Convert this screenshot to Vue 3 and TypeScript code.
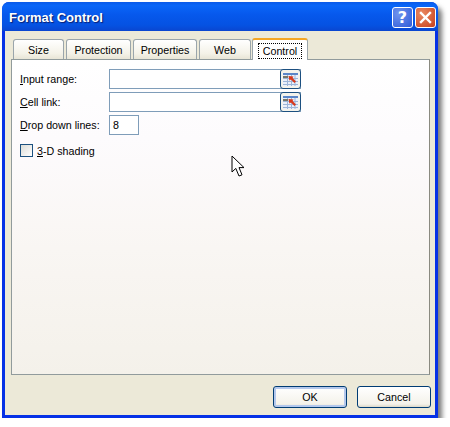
<script setup lang="ts">
const tabs = [
  { label: 'Size', width: 51 },
  { label: 'Protection', width: 65 },
  { label: 'Properties', width: 64 },
  { label: 'Web', width: 52 },
]
const fields = [
  { key: 'I', rest: 'nput range:' },
  { key: 'C', rest: 'ell link:' },
]
</script>

<template>
  <div class="window">
    <div class="titlebar">
      <span class="title">Format Control</span>
      <button class="cap help">?</button>
      <button class="cap close">
        <svg width="13" height="13" viewBox="0 0 13 13">
          <path d="M2 2 L11 11 M11 2 L2 11" stroke="#fff" stroke-width="2.4" stroke-linecap="square" />
        </svg>
      </button>
    </div>
    <div class="body">
      <div class="tabs">
        <div v-for="t in tabs" :key="t.label" class="tab" :style="{ width: t.width + 'px' }">{{ t.label }}</div>
        <div class="tab active"><span class="focus">Control</span></div>
      </div>
      <div class="pane">
        <div v-for="f in fields" :key="f.key" class="row">
          <label class="lbl"><u>{{ f.key }}</u>{{ f.rest }}</label>
          <div class="input wide">
            <button class="refedit">
              <svg width="15" height="13" viewBox="0 0 15 13">
                <rect x="0" y="0" width="15" height="13" fill="#e9effa" />
                <rect x="0" y="0" width="15" height="2" fill="#5b86c8" />
                <path d="M0 5.5H15M0 8.5H15M0 11.5H15M4.5 2V13M8.5 2V13M12 2V13" stroke="#9db5d8" />
                <rect x="0" y="3" width="5" height="2" fill="#77776a" />
                <path d="M5.5 3 L10.5 3.4 L9.6 4.9 L13 8.4 L11.4 10 L8 6.5 L6.4 7.6 Z" fill="#d8391c" />
              </svg>
            </button>
          </div>
        </div>
        <div class="row">
          <label class="lbl"><u>D</u>rop down lines:</label>
          <div class="input small">8</div>
        </div>
        <div class="check">
          <span class="box"></span>
          <span><u>3</u>-D shading</span>
        </div>
        <svg class="cursor" width="14" height="23" viewBox="0 0 14 23">
          <path d="M1 1 V17 L4.8 13.4 L8 21 L11 19.8 L8 12.6 L13 12.6 Z" fill="#fff" stroke="#000" stroke-width="1" />
        </svg>
      </div>
      <div class="actions">
        <button class="btn default">OK</button>
        <button class="btn">Cancel</button>
      </div>
    </div>
  </div>
</template>

<style>
html,
body {
  margin: 0;
  background: #fff;
}
</style>

<style scoped>
.window {
  box-sizing: border-box;
  width: 436px;
  height: 416px;
  margin: 2px 0 0 2px;
  display: flex;
  flex-direction: column;
  background: #0531e6;
  border-radius: 7px 7px 0 0;
  box-shadow: 4px 5px 5px rgba(50, 50, 50, 0.65);
  font-family: "Liberation Sans", Tahoma, sans-serif;
  font-size: 10.7px;
  color: #000;
}

.titlebar {
  box-sizing: border-box;
  height: 29px;
  flex: none;
  display: flex;
  align-items: center;
  gap: 2px;
  padding: 2px 2px 0 7px;
  border-radius: 7px 7px 0 0;
  background: linear-gradient(#0a5ae8 0, #0a66f8 12%, #0658ec 45%, #0552e2 80%, #0a46d0 100%);
}

.title {
  flex: 1;
  color: #fff;
  font-size: 13px;
  font-weight: 700;
  text-shadow: 1px 1px 1px #0a1f70;
}

.cap {
  box-sizing: border-box;
  width: 21px;
  height: 21px;
  padding: 0;
  display: flex;
  align-items: center;
  justify-content: center;
  border: 1px solid #fff;
  border-radius: 3px;
  color: #fff;
}

.help {
  background: radial-gradient(circle at 30% 30%, #6f94ee, #2f5ad8);
  font-family: "DejaVu Sans", sans-serif;
  font-size: 16px;
  font-weight: 700;
}

.close {
  background: radial-gradient(circle at 30% 30%, #ea8a62, #c8401c);
}

.body {
  flex: 1;
  display: flex;
  flex-direction: column;
  margin: 0 3px 3px;
  padding: 7px 4px 0 6px;
  background: #ece9d8;
}

.tabs {
  display: flex;
  align-items: flex-end;
  height: 22px;
  padding-left: 2px;
  gap: 2px;
  position: relative;
  z-index: 1;
  margin-bottom: -1px;
}

.tab {
  box-sizing: border-box;
  height: 20px;
  margin-bottom: 1px;
  padding-top: 1px;
  display: flex;
  align-items: center;
  justify-content: center;
  border: 1px solid #9aa5ab;
  border-bottom: none;
  border-radius: 3px 3px 0 0;
  background: linear-gradient(#fff, #f4f2e8 70%, #e8e5d6);
}

.tab.active {
  width: 56px;
  height: 22px;
  margin-bottom: 0;
  margin-left: -1px;
  border-top: 2px solid #f5a623;
  background: #fff;
}

.focus {
  padding: 1px 4px;
  outline: 1px dotted #000;
}

.pane {
  box-sizing: border-box;
  position: relative;
  width: 419px;
  height: 316px;
  padding: 9px 8px;
  display: flex;
  flex-direction: column;
  gap: 3px;
  border: 1px solid #919b9c;
  border-right-color: #8a8a80;
  background: linear-gradient(#fff 0, #fdfbfd 25%, #f9f6f3 60%, #f4f1ea 100%);
}

.row {
  display: flex;
  align-items: center;
  height: 20px;
}

.lbl {
  width: 89px;
  flex: none;
}

.input {
  box-sizing: border-box;
  height: 20px;
  border: 1px solid #7f9db9;
  background: #fff;
  display: flex;
  align-items: center;
}

.wide {
  width: 192px;
  justify-content: flex-end;
}

.small {
  width: 30px;
  padding-left: 3px;
}

.refedit {
  box-sizing: border-box;
  width: 21px;
  height: 20px;
  margin: -1px -1px -1px 0;
  padding: 0;
  display: flex;
  align-items: center;
  justify-content: center;
  border: 1px solid #1c4f80;
  border-radius: 3px;
  background: #f4f3ec;
}

.check {
  display: flex;
  align-items: center;
  gap: 4px;
  margin-top: 6px;
  height: 13px;
}

.box {
  box-sizing: border-box;
  width: 13px;
  height: 13px;
  border: 1px solid #1c5180;
  background: linear-gradient(135deg, #dcdcd7, #fff);
}

.cursor {
  position: absolute;
  left: 219px;
  top: 95px;
}

.actions {
  display: flex;
  justify-content: flex-end;
  gap: 10px;
  margin-top: 11px;
}

.btn {
  box-sizing: border-box;
  width: 74px;
  height: 22px;
  padding: 0;
  font: inherit;
  color: #000;
  border: 1px solid #003c74;
  border-radius: 3px;
  background: linear-gradient(#fff, #f4f2ea 85%, #dcd8c8);
}

.btn.default {
  box-shadow: inset 0 0 0 2px #b4c8ec;
}
</style>
